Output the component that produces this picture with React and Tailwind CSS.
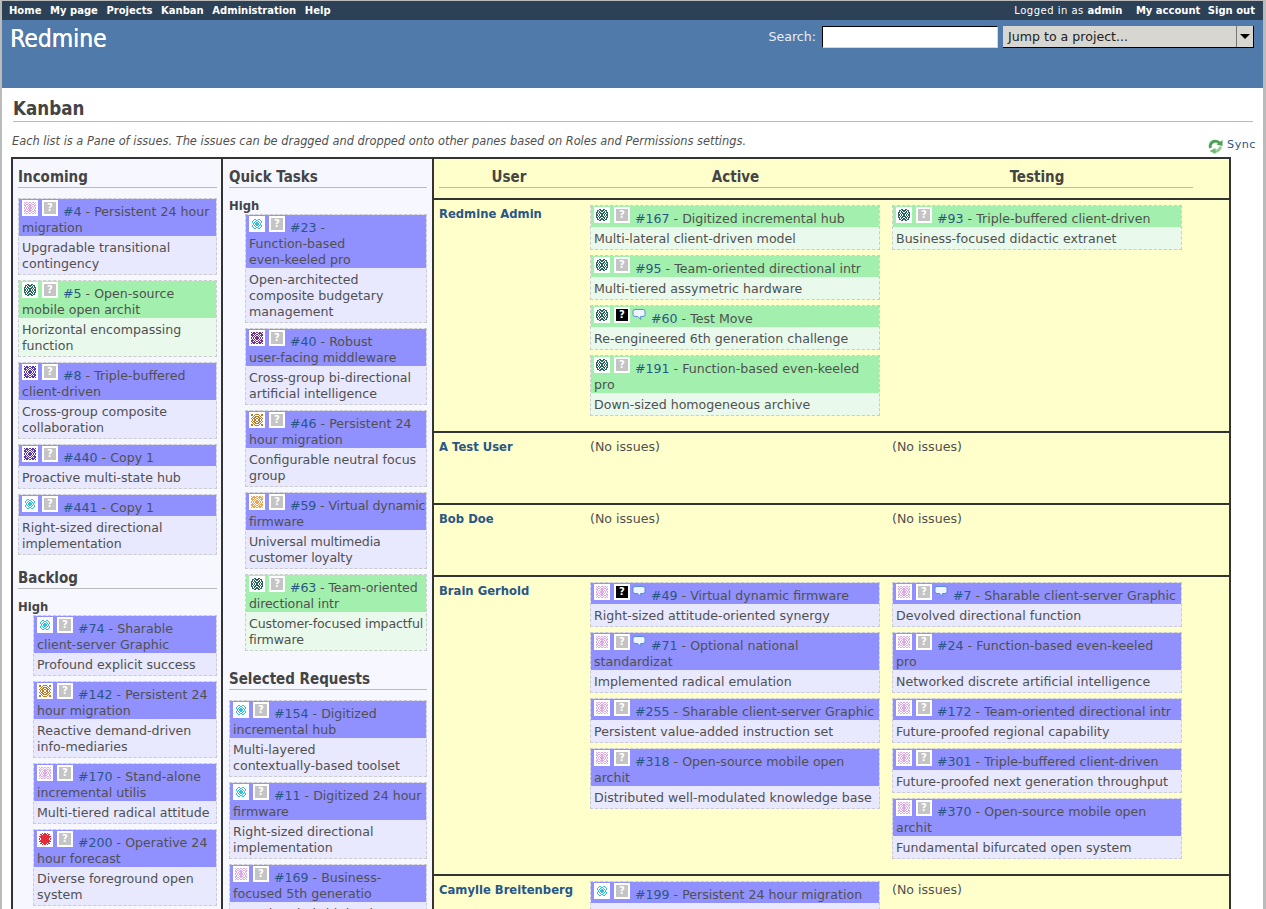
// Redmine Kanban board page
const ROSETTES = {
  // one quadrant of each identicon, mirrored when drawn
  ring: ["000000", "000110", "001001", "010010", "010101", "001011"],
  lattice: ["101101", "010010", "101101", "110011", "010101", "101011"],
  knot: ["000110", "011011", "010101", "110110", "101011", "110101"],
  weave: ["101101", "011110", "110101", "111010", "010101", "101011"],
  blot: ["000101", "011011", "001111", "111111", "011111", "101111"],
  tile: ["110011", "110100", "001011", "010110", "101101", "010110"],
};

const ICONS = {
  pink: { color: "#dfa8e6", shape: "lattice" },
  teal: { color: "#27665a", shape: "knot" },
  violet: { color: "#5a32b4", shape: "weave" },
  plum: { color: "#7a2c8e", shape: "weave" },
  cyan: { color: "#2fc0dc", shape: "ring" },
  brown: { color: "#b87a28", shape: "tile" },
  orange: { color: "#e8a55a", shape: "weave" },
  red: { color: "#e42c3c", shape: "blot" },
};

function Identicon({ kind }) {
  const { color, shape } = ICONS[kind];
  const rows = ROSETTES[shape];
  const cells = [];
  rows.forEach((row, y) => {
    [...row].forEach((c, x) => {
      if (c === "1") {
        [[x, y], [11 - x, y], [x, 11 - y], [11 - x, 11 - y]].forEach(([a, b]) => {
          cells.push(<rect key={`${a}-${b}`} x={a} y={b} width="1" height="1" fill={color} />);
        });
      }
    });
  });
  return (
    <span className="inline-block align-top -mt-[4px] w-4 h-4 bg-white p-[2px]">
      <svg viewBox="0 0 12 12" width="12" height="12" shapeRendering="crispEdges">{cells}</svg>
    </span>
  );
}

function HelpIcon({ dark }) {
  return (
    <span className="inline-block align-top -mt-[4px] ml-1 w-4 h-4 bg-white p-[2px]">
      <span className={`flex w-3 h-3 items-center justify-center text-[10px] leading-3 font-bold ${dark ? "bg-black text-white" : "bg-[#c4c4c4] text-white"}`}>?</span>
    </span>
  );
}

function CommentIcon() {
  return (
    <svg className="inline-block align-top -mt-[3px] ml-[2px]" width="14" height="14" viewBox="0 0 14 14">
      <path d="M3 1.5h8a2 2 0 0 1 2 2v3a2 2 0 0 1-2 2H8.5L9 11.5 5.5 8.5H3a2 2 0 0 1-2-2v-3a2 2 0 0 1 2-2z" fill="#eef5ff" stroke="#5b8fd0" strokeWidth="1" />
    </svg>
  );
}

function Card({ id, title, desc, icon, green, dark, comment, tight }) {
  return (
    <div className={`border border-dashed border-[#cccccc] mb-[5px] whitespace-pre ${tight ? "tracking-[-0.13px]" : ""} ${green ? "bg-[#e9f9ec]" : "bg-[#e8e8ff]"}`}>
      <div className={`px-[3px] pt-[5px] ${green ? "bg-[#a3f0ae]" : "bg-[#9090ff]"}`}>
        <Identicon kind={icon} />
        <HelpIcon dark={dark} />
        {comment && <CommentIcon />}
        <a className="text-[#2a5685] ml-[5px]">#{id}</a> - {title}
      </div>
      <div className="px-[3px] pt-[4px] pb-[2px]">{desc}</div>
    </div>
  );
}

function PaneTitle({ children, className = "" }) {
  return (
    <h3 className={`font-['DejaVu_Sans_Condensed','DejaVu_Sans',sans-serif] text-[15px] leading-[18px] font-bold text-[#444444] border-b border-[#bbbbbb] pb-px ${className}`}>
      {children}
    </h3>
  );
}

function ColumnTitle({ children }) {
  return (
    <h3 className="font-['DejaVu_Sans_Condensed','DejaVu_Sans',sans-serif] pr-[11px] text-center text-[15px] leading-[18px] font-bold text-[#444444]">
      {children}
    </h3>
  );
}

const incoming = [
  { id: 4, title: "Persistent 24 hour\nmigration", desc: "Upgradable transitional\ncontingency", icon: "pink" },
  { id: 5, title: "Open-source\nmobile open archit", desc: "Horizontal encompassing\nfunction", icon: "teal", green: true },
  { id: 8, title: "Triple-buffered\nclient-driven", desc: "Cross-group composite\ncollaboration", icon: "violet" },
  { id: 440, title: "Copy 1", desc: "Proactive multi-state hub", icon: "violet" },
  { id: 441, title: "Copy 1", desc: "Right-sized directional\nimplementation", icon: "cyan" },
];

const backlogHigh = [
  { id: 74, title: "Sharable\nclient-server Graphic", desc: "Profound explicit success", icon: "cyan" },
  { id: 142, title: "Persistent 24\nhour migration", desc: "Reactive demand-driven\ninfo-mediaries", icon: "brown" },
  { id: 170, title: "Stand-alone\nincremental utilis", desc: "Multi-tiered radical attitude", icon: "pink" },
  { id: 200, title: "Operative 24\nhour forecast", desc: "Diverse foreground open\nsystem", icon: "red" },
];

const quickHigh = [
  { id: 23, title: "\nFunction-based\neven-keeled pro", desc: "Open-architected\ncomposite budgetary\nmanagement", icon: "cyan" },
  { id: 40, title: "Robust\nuser-facing middleware", desc: "Cross-group bi-directional\nartificial intelligence", icon: "plum" },
  { id: 46, title: "Persistent 24\nhour migration", desc: "Configurable neutral focus\ngroup", icon: "brown" },
  { id: 59, title: "Virtual dynamic\nfirmware", desc: "Universal multimedia\ncustomer loyalty", icon: "orange", tight: true },
  { id: 63, title: "Team-oriented\ndirectional intr", desc: "Customer-focused impactful\nfirmware", icon: "teal", green: true, tight: true },
];

const selected = [
  { id: 154, title: "Digitized\nincremental hub", desc: "Multi-layered\ncontextually-based toolset", icon: "cyan" },
  { id: 11, title: "Digitized 24 hour\nfirmware", desc: "Right-sized directional\nimplementation", icon: "cyan" },
  { id: 169, title: "Business-\nfocused 5th generatio", desc: "Seamless hybrid database", icon: "pink" },
];

const users = [
  {
    name: "Redmine Admin",
    active: [
      { id: 167, title: "Digitized incremental hub", desc: "Multi-lateral client-driven model", icon: "teal", green: true },
      { id: 95, title: "Team-oriented directional intr", desc: "Multi-tiered assymetric hardware", icon: "teal", green: true },
      { id: 60, title: "Test Move", desc: "Re-engineered 6th generation challenge", icon: "teal", green: true, dark: true, comment: true },
      { id: 191, title: "Function-based even-keeled\npro", desc: "Down-sized homogeneous archive", icon: "teal", green: true },
    ],
    testing: [
      { id: 93, title: "Triple-buffered client-driven", desc: "Business-focused didactic extranet", icon: "teal", green: true },
    ],
  },
  { name: "A Test User", active: [], testing: [] },
  { name: "Bob Doe", active: [], testing: [] },
  {
    name: "Brain Gerhold",
    active: [
      { id: 49, title: "Virtual dynamic firmware", desc: "Right-sized attitude-oriented synergy", icon: "pink", dark: true, comment: true },
      { id: 71, title: "Optional national\nstandardizat", desc: "Implemented radical emulation", icon: "pink", comment: true },
      { id: 255, title: "Sharable client-server Graphic", desc: "Persistent value-added instruction set", icon: "pink" },
      { id: 318, title: "Open-source mobile open\narchit", desc: "Distributed well-modulated knowledge base", icon: "pink" },
    ],
    testing: [
      { id: 7, title: "Sharable client-server Graphic", desc: "Devolved directional function", icon: "pink", comment: true },
      { id: 24, title: "Function-based even-keeled\npro", desc: "Networked discrete artificial intelligence", icon: "pink" },
      { id: 172, title: "Team-oriented directional intr", desc: "Future-proofed regional capability", icon: "pink" },
      { id: 301, title: "Triple-buffered client-driven", desc: "Future-proofed next generation throughput", icon: "pink" },
      { id: 370, title: "Open-source mobile open\narchit", desc: "Fundamental bifurcated open system", icon: "pink" },
    ],
  },
  {
    name: "Camylle Breitenberg",
    active: [{ id: 199, title: "Persistent 24 hour migration", desc: "Synchronised zero defect hub", icon: "cyan" }],
    testing: [],
  },
];

function IssueCell({ issues }) {
  if (issues.length === 0) return <div className="pt-[6px]">(No issues)</div>;
  return (
    <div className="w-[290px] pt-[5px] pb-[10px]">
      {issues.map((issue) => (
        <Card key={issue.id} {...issue} />
      ))}
    </div>
  );
}

function UserRow({ user }) {
  return (
    <div className="grid grid-cols-[151px_302px_301px] pl-[5px] min-h-[72px] border-b-2 border-[#333333]">
      <div className="pt-[6px] text-[11.6px] font-bold text-[#2a5685]">{user.name}</div>
      <IssueCell issues={user.active} />
      <IssueCell issues={user.testing} />
    </div>
  );
}

export default function App() {
  return (
    <div className="h-screen overflow-hidden bg-white text-[12.6px] leading-4 text-[#505050] border-l-2 border-r-[3px] border-t border-[#bbbbbb] font-['DejaVu_Sans',sans-serif]">
      {/* Top menu */}
      <div className="h-[19px] bg-[#2c4056] flex justify-between items-center pl-[7px] pr-[8px] text-[10px] text-white font-bold">
        <div className="flex gap-[8.6px]">
          <span>Home</span>
          <span>My page</span>
          <span>Projects</span>
          <span>Kanban</span>
          <span>Administration</span>
          <span>Help</span>
        </div>
        <div className="flex gap-[7.5px]">
          <span className="font-normal tracking-[0.5px] mr-[6px]">Logged in as <b className="tracking-normal">admin</b></span>
          <span>My account</span>
          <span>Sign out</span>
        </div>
      </div>

      {/* Header */}
      <div className="h-[68px] bg-[#507aaa] flex justify-between pl-[8px] pr-[9px] text-white">
        <div className="font-['DejaVu_Sans_Condensed','DejaVu_Sans',sans-serif] text-[24.4px] leading-[28px] pt-[5px] [text-shadow:0.4px_0_0_#ffffff]">Redmine</div>
        <div className="flex items-start pt-[6px]">
          <span className="text-[#e8eef6] leading-[22px] mr-[6px]">Search:</span>
          <input className="w-[176px] h-[22px] bg-white border border-t-black border-l-black border-r-[#d8d6d0] border-b-[#d8d6d0] outline-none" />
          <div className="ml-[5px] w-[251px] h-[22px] bg-[#d8d6d0] border-b border-r border-black text-[#222222] flex justify-between items-center pl-[5px]">
            <span>Jump to a project...</span>
            <span className="w-[17px] h-full border-l border-[#777777] flex items-center justify-center bg-[#d8d6d0]">
              <span className="w-0 h-0 border-x-[5px] border-x-transparent border-t-[5px] border-t-black" />
            </span>
          </div>
        </div>
      </div>

      {/* Content */}
      <div className="pl-[9px] pt-[9px]">
        <h2 className="font-['DejaVu_Sans_Condensed','DejaVu_Sans',sans-serif] ml-[2px] mr-[10px] text-[18.6px] leading-[24px] font-bold text-[#444444] border-b border-[#bbbbbb] mb-[11px]">
          Kanban
        </h2>
        <div className="flex justify-between pr-[7px] h-[24px]">
          <p className="italic text-[11.4px] leading-4 text-[#505050] pl-px">
            Each list is a Pane of issues. The issues can be dragged and dropped onto other panes based on Roles and Permissions settings.
          </p>
          <div className="flex items-start pt-[4px] text-[#2a5685] text-[11.2px] leading-4 tracking-[0.5px]">
            <svg className="mt-[2px] mr-[4px]" width="15" height="15" viewBox="0 0 15 15">
              <path d="M2.5 9A5 5 0 0 1 12 5.5" fill="none" stroke="#4f9f55" strokeWidth="3" />
              <path d="M8.5 5.5l6 1.5 0-6z" fill="#4f9f55" />
              <path d="M12.5 7.5A5 5 0 0 1 6 12" fill="none" stroke="#8ed08a" strokeWidth="3" />
              <path d="M7.5 9v6l-6-3z" fill="#6fb86f" />
            </svg>
            Sync
          </div>
        </div>

        {/* Board */}
        <div className="flex w-[1220px] border-2 border-[#333333] border-b-0">
          <div className="w-[208px] shrink-0 bg-[#f7f8ff] pl-[5px] pr-[4px] pt-[9px]">
            <PaneTitle className="mb-[10px]">Incoming</PaneTitle>
            {incoming.map((issue) => <Card key={issue.id} {...issue} />)}
            <PaneTitle className="mt-[14px] mb-[10px]">Backlog</PaneTitle>
            <div className="font-bold text-[11.6px] text-[#444444]">High</div>
            <div className="pl-[15px]">
              {backlogHigh.map((issue) => <Card key={issue.id} {...issue} />)}
            </div>
          </div>

          <div className="w-[213px] shrink-0 bg-[#f7f8ff] border-x-2 border-[#333333] pl-[6px] pr-[5px] pt-[9px]">
            <PaneTitle className="mb-[10px]">Quick Tasks</PaneTitle>
            <div className="font-bold text-[11.6px] text-[#444444]">High</div>
            <div className="pl-[16px]">
              {quickHigh.map((issue) => <Card key={issue.id} {...issue} />)}
            </div>
            <PaneTitle className="mt-[19px] mb-[10px]">Selected Requests</PaneTitle>
            {selected.map((issue) => <Card key={issue.id} {...issue} />)}
          </div>

          <div className="flex-1 bg-[#ffffcc]">
            <div className="h-[41px] border-b-2 border-[#333333] pl-[5px] pt-[9px]">
              <div className="w-[754px] grid grid-cols-[151px_302px_301px] border-b border-[#bbbbbb] pb-px">
                <ColumnTitle>User</ColumnTitle>
                <ColumnTitle>Active</ColumnTitle>
                <ColumnTitle>Testing</ColumnTitle>
              </div>
            </div>
            {users.map((user) => <UserRow key={user.name} user={user} />)}
          </div>
        </div>
      </div>
    </div>
  );
}
